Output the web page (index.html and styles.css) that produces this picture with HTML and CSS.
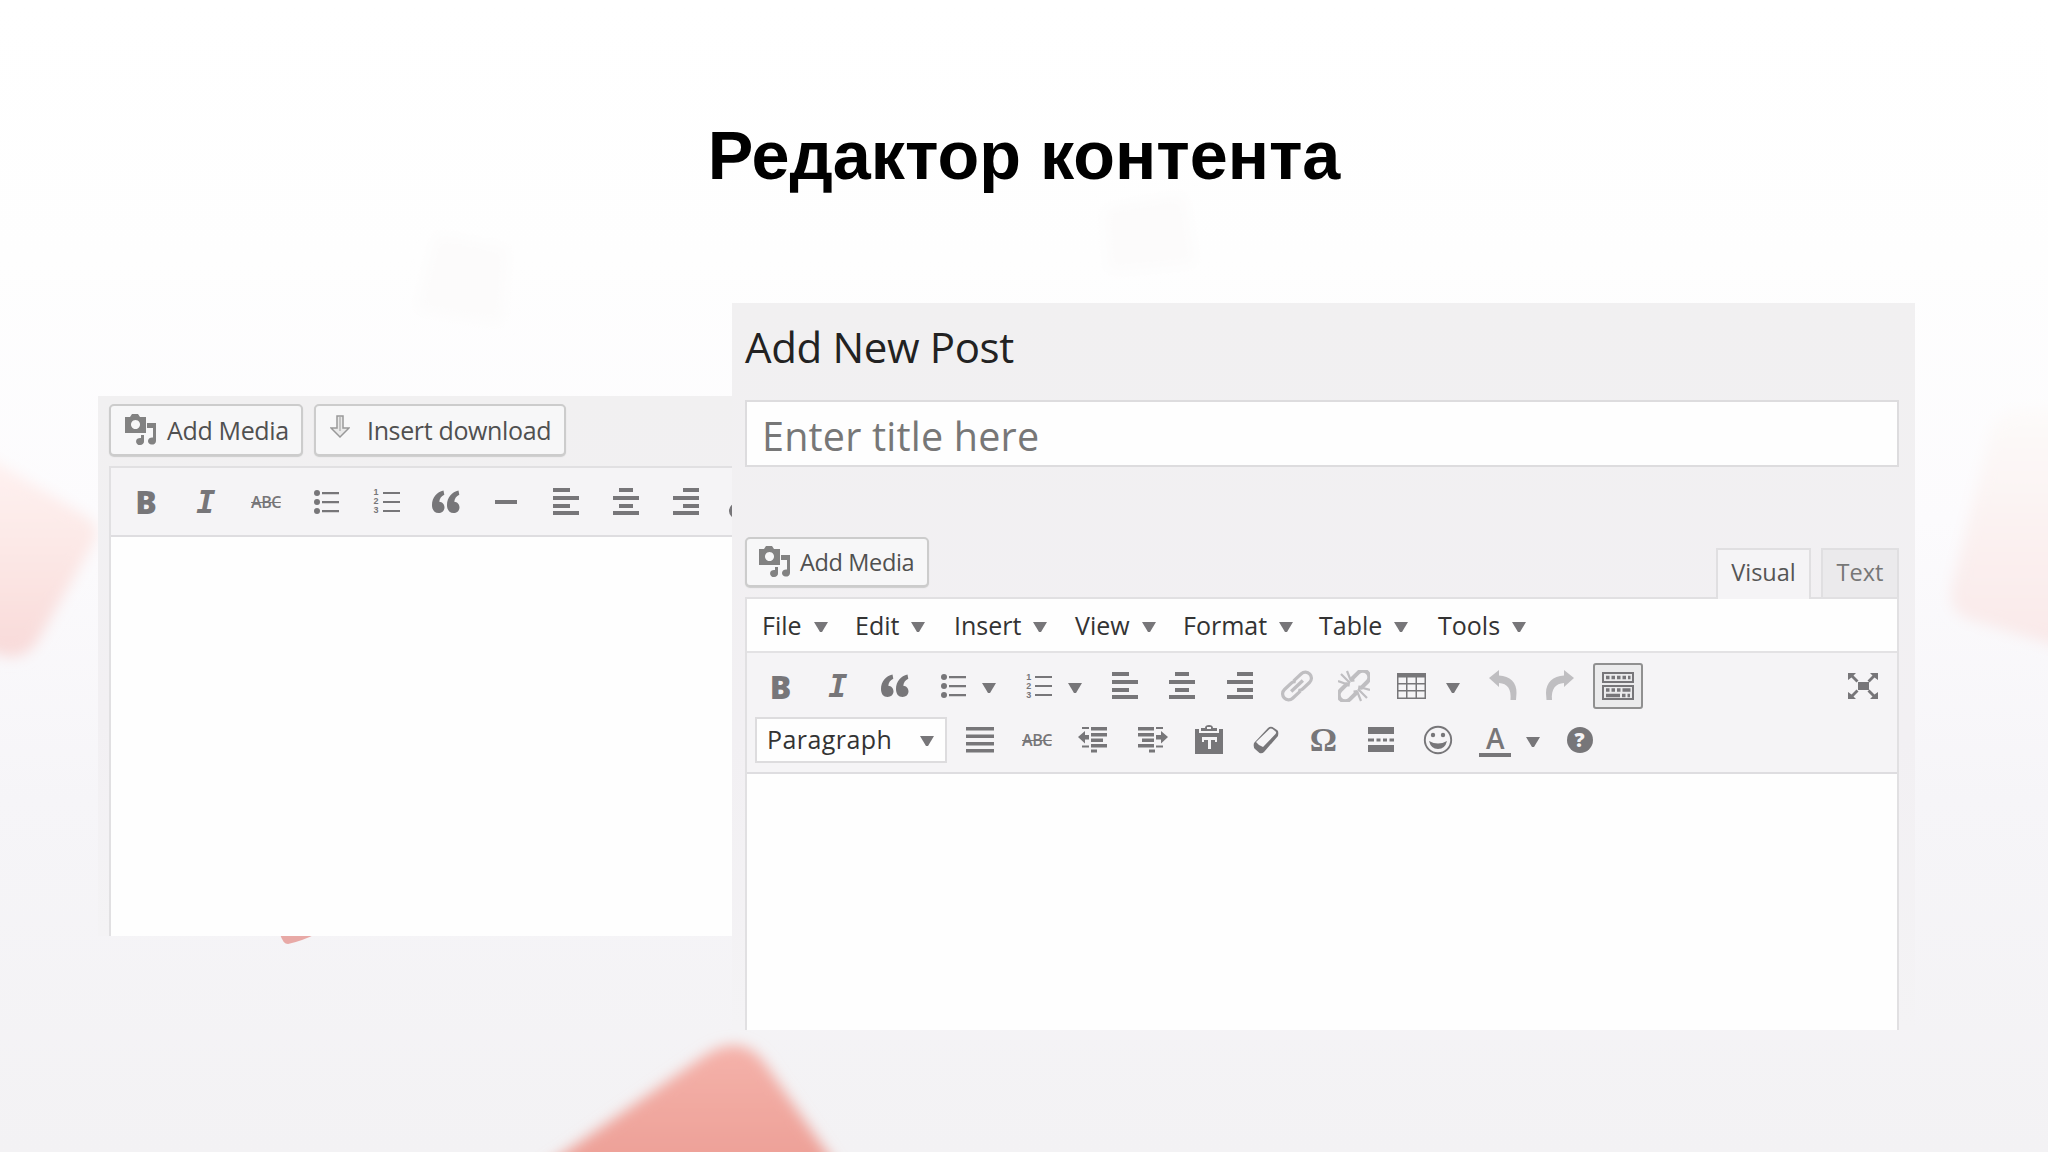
FILE: index.html
```html
<!DOCTYPE html>
<html lang="ru">
<head>
  <meta charset="UTF-8" />
  <meta name="viewport" content="width=device-width, initial-scale=1" />
  <title>Редактор контента</title>
  <link rel="stylesheet" href="styles.css">
</head>
<body>

  <!-- Icon set -->
  <svg class="sprite" width="0" height="0">
    <symbol id="media" viewBox="0 0 32 32">
      <path fill-rule="evenodd" d="M0 3h5l2-3h6l2 3h6v16H0zM10.500 6a4.500 4.500 0 1 0 .01 0z"/>
      <path d="M22 9h9v18a4 3.600 0 1 1-3-3.500V14h-6z"/>
      <path d="M16 21h3v6a4 3.600 0 1 1-3-3z"/>
    </symbol>
    <symbol id="download" viewBox="0 0 20 24">
      <path d="M7 1h6v12h6l-9 9-9-9h6z" fill="#e9e9e9" stroke="#999" stroke-width="1.500"/>
      <path d="M10 2v14" stroke="#b5b5b5" stroke-width="1.500"/>
    </symbol>
    <symbol id="quote" viewBox="0 0 32 32">
      <path d="M13.500 4.500C7 6 2 11.500 2 19c0 5 2.500 8 6.500 8 3.500 0 6-2.300 6-5.700 0-3.200-2.200-5.300-5.200-5.600.3-3 2-5.700 5-7z"/>
      <path d="M28.500 4.500C22 6 17 11.500 17 19c0 5 2.500 8 6.500 8 3.500 0 6-2.300 6-5.700 0-3.200-2.200-5.300-5.200-5.600.3-3 2-5.700 5-7z"/>
    </symbol>
    <symbol id="ul" viewBox="0 0 32 32">
      <path d="M12 6h17v2.200H12zM12 15h17v2.200H12zM12 24h17v2.200H12z"/>
      <circle cx="7" cy="7" r="3"/><circle cx="7" cy="16" r="3"/><circle cx="7" cy="25" r="3"/>
    </symbol>
    <symbol id="hr" viewBox="0 0 32 32"><path d="M5 14h22v4H5z"/></symbol>
    <symbol id="left" viewBox="0 0 32 32"><path d="M3 2h17v4H3zM3 10h26v4H3zM3 18h17v4H3zM3 25h26v4H3z"/></symbol>
    <symbol id="center" viewBox="0 0 32 32"><path d="M9 2h14v4H9zM3 10h26v4H3zM9 18h14v4H9zM3 25h26v4H3z"/></symbol>
    <symbol id="right" viewBox="0 0 32 32"><path d="M13 2h16v4H13zM3 10h26v4H3zM13 18h16v4H13zM3 25h26v4H3z"/></symbol>
    <symbol id="justify" viewBox="0 0 32 32"><path d="M2 3h28v3.500H2zM2 10.500h28V14H2zM2 18h28v3.500H2zM2 25h28v3.500H2z"/></symbol>
    <symbol id="link" viewBox="0 0 32 32">
      <g transform="rotate(-43 16 16)" fill="none" stroke="currentColor" stroke-width="3.200">
        <path d="M15 22H4.500a6 6 0 0 1 0-12H14a5 5 0 0 1 4 2"/>
        <path d="M17 10h10.500a6 6 0 0 1 0 12H18a5 5 0 0 1-4-2"/>
        <path d="M8 16h16" stroke-width="3.400"/>
      </g>
    </symbol>
    <symbol id="unlink" viewBox="0 0 32 32">
      <g transform="rotate(-45 16 16)" fill="none" stroke="currentColor" stroke-width="4">
        <path d="M14 20l-2 2.500H3.500a6.500 6.500 0 0 1 0-13H12l2 2.500"/>
        <path d="M18 12l2-2.500h8.500a6.500 6.500 0 0 1 0 13H20L18 20"/>
      </g>
      <path d="M9 1l4 10M3 4l9 9M0 11l11 4M23 31l-4-10M29 28l-9-9M32 20l-11-3" fill="none" stroke="currentColor" stroke-width="2.200"/>
    </symbol>
    <symbol id="table" viewBox="0 0 32 32">
      <path fill-rule="evenodd" d="M1 3h29v26H1zM2.500 7.500v5.500h7.500V7.500zM11.500 7.500v5.500h8V7.500zM21 7.500v5.500h7.500V7.500zM2.500 14.500v5.500h7.500v-5.500zM11.500 14.500v5.500h8v-5.500zM21 14.500v5.500h7.500v-5.500zM2.500 21.500v6h7.500v-6zM11.500 21.500v6h8v-6zM21 21.500v6h7.500v-6z"/>
    </symbol>
    <symbol id="undo" viewBox="0 0 32 32"><path d="M2 8l10-8v5.500c11 .5 18 7 17.500 17.500L29 30h-5.500c1-11-3-16.500-11.500-17v4z"/></symbol>
    <symbol id="redo" viewBox="0 0 32 32"><path d="M30 8L20 0v5.500C9 6 2 12.500 2 23l.5 7H8c-1-11 3.500-16.500 12-17v4z"/></symbol>
    <symbol id="kitchen" viewBox="0 0 34 32">
      <path fill="none" stroke="currentColor" stroke-width="2" d="M2 3h30v9H2zM2 16h30v13H2z"/>
      <path fill="none" stroke="currentColor" stroke-width="3.500" d="M5 7.500h3.500m2 0h3.500m2 0h3.500m2 0h3.500m2 0h2.500M5 20h3.500m2 0h3.500m2 0h3.500m2 0h8M5 25.500h14m2 0h3.500m2 0h2.500"/>
    </symbol>
    <symbol id="full" viewBox="0 0 32 32">
      <path d="M11 12h11v8H11zM1 3h8L6.500 5.500l5 5-2 2-5-5L1 10zM31 3h-8l2.500 2.500-5 5 2 2 5-5L31 10zM1 29h8l-2.500-2.500 5-5-2-2-5 5L1 22zM31 29h-8l2.500-2.500-5-5 2-2 5 5L31 22z"/>
    </symbol>
    <symbol id="outdent" viewBox="0 0 32 32">
      <path d="M13 3h16v3.500H13zM13 9h16v3.500H13zM13 14.500h12V18H13zM13 20h16v3.500H13zM13 25.500h6v3h-6zM4 3h7v2H4zM4 21.500h7v2H4zM0 13l7-6v4h4v4.500H7v4z"/>
    </symbol>
    <symbol id="indent" viewBox="0 0 32 32">
      <path d="M2 3h16v3.500H2zM2 9h16v3.500H2zM6 14.500h12V18H6zM2 20h16v3.500H2zM13 25.500h6v3h-6zM20 3h7v2h-7zM20 21.500h7v2h-7zM32 13l-7-6v4h-5v4.500h5v4z"/>
    </symbol>
    <symbol id="paste" viewBox="0 0 32 32">
      <path fill-rule="evenodd" d="M2 5h4v4h20V5h4v25H2zM9 13v5h2v-2h4v9h3v-9h4v2h2v-5z"/>
      <path fill-rule="evenodd" d="M8 7V4h4c0-2 1.500-3 4-3s4 1 4 3h4v3zM14 3v2h4V3z"/>
    </symbol>
    <symbol id="eraser" viewBox="0 0 32 32">
      <path d="M4 19L18 4q2-2 4.500-1L27 6q2 1 1 6L14 28q-2 2-4.500 1L5 25q-2-2-1-6z"/>
      <path d="M6 18L19 5.500q1.500-1.500 3.500-.5l2.500 2q2 1 .5 3L13 23q-4-1-7-5z" fill="#f5f4f6"/>
    </symbol>
    <symbol id="more" viewBox="0 0 32 32"><path d="M3 3h26v7H3zM3 14.500h6v3H3zM11.500 14.500h4v3h-4zM18 14.500h4v3h-4zM24.500 14.500H29v3h-4.500zM3 21h26v7H3z"/></symbol>
    <symbol id="smile" viewBox="0 0 32 32">
      <circle cx="16" cy="16" r="13.200" fill="none" stroke="currentColor" stroke-width="1.900"/>
      <circle cx="11" cy="11" r="2.200"/><circle cx="21" cy="11" r="2.200"/>
      <path d="M7 17q9 5 18 0-2 8-9 8t-9-8z"/>
    </symbol>
    <symbol id="caret" viewBox="0 0 16 12"><path d="M1 1h14L9 11H7z"/></symbol>
  </svg>

  <!-- Slide backdrop -->
  <svg class="backdrop" viewBox="0 0 2048 1152">
    <defs>
      <filter id="soft" x="-20%" y="-20%" width="140%" height="140%"><feGaussianBlur stdDeviation="7"/></filter>
      <linearGradient id="g-left" x1="0" y1="0" x2="0" y2="1"><stop offset="0" stop-color="#fff4f3"/><stop offset=".5" stop-color="#fce8e6"/><stop offset="1" stop-color="#f8dad9"/></linearGradient>
      <linearGradient id="g-right" x1="0" y1="0" x2="0" y2="1"><stop offset="0" stop-color="#fdfbfa"/><stop offset="1" stop-color="#f9e8e8"/></linearGradient>
      <linearGradient id="g-bottom" x1="0" y1="0" x2="0" y2="1"><stop offset="0" stop-color="#f5b2aa"/><stop offset="1" stop-color="#ec9d94"/></linearGradient>
    </defs>
    <g filter="url(#soft)">
      <path d="M-40 440L86 516q16 10 8 26L38 640q-12 20-34 16l-44-14z" fill="url(#g-left)"/>
      <path d="M2080 405l-64 4q-20 4-26 24l-38 152q-6 24 16 34l112 34z" fill="url(#g-right)"/>
      <path d="M525 1180L704 1056q36-24 60 6L846 1180z" fill="url(#g-bottom)"/>
      <path d="M436 234l72 14-6 76-86-14zM1104 208l80-14 12 70-88 8z" fill="#fcfbfb"/>
    </g>
    <path d="M280 934h36q-14 7-28 10-5 0-8-10z" fill="#e8a9a6"/>
  </svg>

  <main class="slide">
    <h1 class="slide-title">Редактор контента</h1>

    <div class="screens">
      <section class="screen screen-old">
        <div class="media-row">
          <button class="btn"><svg class="i-media"><use href="#media"/></svg>Add Media</button>
          <button class="btn btn-download"><svg class="i-download"><use href="#download"/></svg>Insert download</button>
        </div>
        <div class="editor">
          <div class="toolbar">
            <span class="tool bold">B</span>
            <span class="tool italic">I</span>
            <span class="tool strike"><s>ABC</s></span>
            <span class="tool"><svg><use href="#ul"/></svg></span>
            <span class="tool"><span class="ol"><i>1</i><i>2</i><i>3</i></span></span>
            <span class="tool"><svg><use href="#quote"/></svg></span>
            <span class="tool"><svg><use href="#hr"/></svg></span>
            <span class="tool"><svg><use href="#left"/></svg></span>
            <span class="tool"><svg><use href="#center"/></svg></span>
            <span class="tool"><svg><use href="#right"/></svg></span>
            <span class="tool cut"><svg><use href="#link"/></svg></span>
          </div>
          <div class="page"></div>
        </div>
      </section>

      <section class="screen screen-new">
        <h2>Add New Post</h2>
        <div class="title-field">Enter title here</div>
        <div class="editor-head">
          <button class="btn btn-small"><svg class="i-media"><use href="#media"/></svg>Add Media</button>
          <div class="tabs">
            <span class="tab active">Visual</span>
            <span class="tab">Text</span>
          </div>
        </div>
        <div class="editor">
          <div class="menubar">
            <span>File<svg class="caret"><use href="#caret"/></svg></span>
            <span>Edit<svg class="caret"><use href="#caret"/></svg></span>
            <span>Insert<svg class="caret"><use href="#caret"/></svg></span>
            <span>View<svg class="caret"><use href="#caret"/></svg></span>
            <span>Format<svg class="caret"><use href="#caret"/></svg></span>
            <span>Table<svg class="caret"><use href="#caret"/></svg></span>
            <span>Tools<svg class="caret"><use href="#caret"/></svg></span>
          </div>
          <div class="tools">
            <div class="tool-row">
              <span class="tool bold">B</span>
              <span class="tool italic">I</span>
              <span class="tool"><svg><use href="#quote"/></svg></span>
              <span class="tool"><svg><use href="#ul"/></svg></span>
              <svg class="caret split"><use href="#caret"/></svg>
              <span class="tool"><span class="ol"><i>1</i><i>2</i><i>3</i></span></span>
              <svg class="caret split"><use href="#caret"/></svg>
              <span class="tool"><svg><use href="#left"/></svg></span>
              <span class="tool"><svg><use href="#center"/></svg></span>
              <span class="tool"><svg><use href="#right"/></svg></span>
              <span class="tool off"><svg><use href="#link"/></svg></span>
              <span class="tool off"><svg><use href="#unlink"/></svg></span>
              <span class="tool"><svg><use href="#table"/></svg></span>
              <svg class="caret split wide"><use href="#caret"/></svg>
              <span class="tool off"><svg><use href="#undo"/></svg></span>
              <span class="tool off"><svg><use href="#redo"/></svg></span>
              <span class="tool"><span class="pressed"><svg class="i-kitchen"><use href="#kitchen"/></svg></span></span>
              <span class="tool last"><svg><use href="#full"/></svg></span>
            </div>
            <div class="tool-row second">
              <span class="select">Paragraph<svg class="caret"><use href="#caret"/></svg></span>
              <span class="tool"><svg><use href="#justify"/></svg></span>
              <span class="tool strike"><s>ABC</s></span>
              <span class="tool"><svg><use href="#outdent"/></svg></span>
              <span class="tool"><svg><use href="#indent"/></svg></span>
              <span class="tool"><svg><use href="#paste"/></svg></span>
              <span class="tool"><svg><use href="#eraser"/></svg></span>
              <span class="tool omega">Ω</span>
              <span class="tool"><svg><use href="#more"/></svg></span>
              <span class="tool"><svg><use href="#smile"/></svg></span>
              <span class="tool"><span class="color">A</span></span>
              <svg class="caret split"><use href="#caret"/></svg>
              <span class="tool"><span class="help">?</span></span>
            </div>
          </div>
          <div class="page"></div>
        </div>
      </section>
    </div>
  </main>

</body>
</html>
```
FILE: styles.css
```css
* {
  box-sizing: border-box;
}

body {
  margin: 0;
  height: 1152px;
  overflow: hidden;
  font-family: "Open Sans", sans-serif;
  background: linear-gradient(#fff 0, #fefefe 260px, #fcfbfd 520px, #f6f5f8 800px, #f3f2f4 100%);
}

svg {
  fill: currentColor;
  flex: none;
}

.sprite {
  position: absolute;
}

.backdrop {
  position: absolute;
  inset: 0;
  width: 2048px;
  height: 1152px;
}

.slide {
  position: relative;
}

.slide-title {
  margin: 0;
  height: 303px;
  padding-top: 116px;
  font: bold 68.300px/78px "Liberation Sans", Arial, sans-serif;
  text-align: center;
  color: #000;
}

.screens {
  display: flex;
  align-items: flex-start;
  padding-left: 98px;
}

.screen {
  overflow: hidden;
  background: linear-gradient(#f1f0f1, #f2f0f3 60%, #f4f3f5);
}

.screen-old {
  width: 634px;
  height: 540px;
  margin-top: 93px;
  padding: 8px 0 0 11px;
}

.screen-new {
  width: 1183px;
  height: 727px;
  padding: 0 16px 0 13px;
}

.media-row {
  display: flex;
  gap: 11px;
  height: 62px;
}

.btn {
  display: flex;
  align-items: center;
  width: 194px;
  height: 52px;
  padding: 0 0 0 14px;
  gap: 10px;
  border: 2px solid #ccc;
  border-radius: 5px;
  background: #f7f7f8;
  box-shadow: 0 1px 1px #ccc;
  font: 25px "Open Sans", sans-serif;
  letter-spacing: -0.350px;
  white-space: nowrap;
  color: #505050;
}

.btn-download {
  width: 252px;
  gap: 17px;
}

.btn-small {
  width: 184px;
  height: 50px;
  padding-left: 12px;
  gap: 9px;
  font-size: 23.500px;
}

.i-media {
  width: 32px;
  height: 32px;
  color: #828282;
}

.i-download {
  width: 20px;
  height: 24px;
  margin-top: -7px;
}

.editor {
  border: 2px solid #e1e0e2;
  border-bottom: 0;
}

.screen-old .editor {
  width: 720px;
}

.toolbar {
  display: flex;
  height: 69px;
  padding-left: 5px;
  border-bottom: 2px solid #dedde0;
  background: #f5f4f6;
}

.page {
  height: 420px;
  background: #fefefe;
}

.tool {
  display: flex;
  align-items: center;
  justify-content: center;
  flex: none;
  width: 57.300px;
  color: #777679;
}

.toolbar .tool {
  width: 60px;
}

.tool svg {
  width: 32px;
  height: 32px;
}

.tool.off {
  color: #bfbec1;
}

.tool.cut {
  justify-content: flex-start;
  padding: 2px 0 0 13px;
}

.bold {
  font: 800 32px "Open Sans", sans-serif;
}

.italic {
  font: italic bold 32px "DejaVu Sans Mono", monospace;
}

.strike {
  font: 600 16px "Open Sans", sans-serif;
  letter-spacing: -0.500px;
}

.omega {
  font: bold 34px "Liberation Serif", serif;
}

/* numbered list icon: digits with a rule beside each */
.ol {
  display: grid;
  grid-auto-rows: 9px;
  width: 26px;
  margin-left: 1px;
}

.ol i {
  display: flex;
  align-items: center;
  justify-content: space-between;
  font: bold 9px/9px "Liberation Sans", sans-serif;
}

.ol i::after {
  content: "";
  width: 17px;
  height: 2px;
  background: currentColor;
}

.screen-new h2 {
  margin: 0;
  height: 97px;
  padding-top: 15px;
  font-size: 42px;
  font-weight: 400;
  line-height: 57px;
  letter-spacing: -0.350px;
  color: #222;
}

.title-field {
  height: 67px;
  padding-left: 15px;
  border: 2px solid #dddcde;
  background: #fefefe;
  font-size: 39.500px;
  line-height: 68px;
  letter-spacing: 0.200px;
  color: #777;
}

.editor-head {
  display: flex;
  justify-content: space-between;
  align-items: flex-end;
  height: 130px;
}

.editor-head .btn {
  margin-bottom: 10px;
}

.tabs {
  display: flex;
  gap: 10px;
}

.tab {
  height: 49px;
  width: 78px;
  border: 2px solid #e0dfe1;
  border-bottom: 0;
  background: #ebeaec;
  font-size: 23.500px;
  line-height: 44px;
  text-align: center;
  color: #777;
}

.tab.active {
  width: 95px;
  height: 51px;
  margin-bottom: -2px;
  background: #f5f4f6;
  color: #555;
}

.menubar {
  display: grid;
  grid-template-columns: 93px 99px 121px 108px 136px 119px 100px;
  height: 54px;
  padding-left: 15px;
  border-bottom: 2px solid #e3e2e4;
  background: #fefefe;
  font-size: 25px;
  line-height: 50px;
  color: #333;
}

.menubar span {
  display: flex;
  align-items: center;
  gap: 11px;
}

.caret {
  width: 16px;
  height: 12px;
  margin-top: 3px;
  color: #777679;
}

.tools {
  height: 121px;
  padding: 8px 5px 0 5px;
  border-bottom: 2px solid #dedde0;
  background: #f5f4f6;
}

.tool-row {
  display: flex;
  align-items: center;
  height: 50px;
}

.second {
  height: 58px;
  padding-left: 3px;
}

.split {
  margin-right: 13px;
}

.split.wide {
  margin: 3px 13px 0 5px;
}

.pressed {
  display: flex;
  align-items: center;
  justify-content: center;
  flex: none;
  width: 50px;
  height: 46px;
  border: 2px solid #909090;
  border-radius: 3px;
  background: #ebebec;
}

.pressed .i-kitchen {
  width: 34px;
}

.last {
  margin-left: auto;
}

.select {
  display: flex;
  align-items: center;
  justify-content: space-between;
  width: 192px;
  height: 46px;
  margin-right: 4px;
  padding: 0 10px 2px 10px;
  border: 2px solid #dddcde;
  background: #fefefe;
  font-size: 25px;
  letter-spacing: 0.450px;
  color: #333;
}

.color {
  width: 32px;
  height: 32px;
  margin-top: 2px;
  border-bottom: 4px solid #777679;
  font-size: 28px;
  font-weight: 600;
  line-height: 26px;
  text-align: center;
}

.second .split {
  margin: 3px 10px 0 1px;
}

.help {
  width: 26px;
  height: 26px;
  border-radius: 50%;
  background: #777679;
  color: #f5f4f6;
  font-size: 20px;
  font-weight: 800;
  line-height: 26px;
  text-align: center;
}
```
